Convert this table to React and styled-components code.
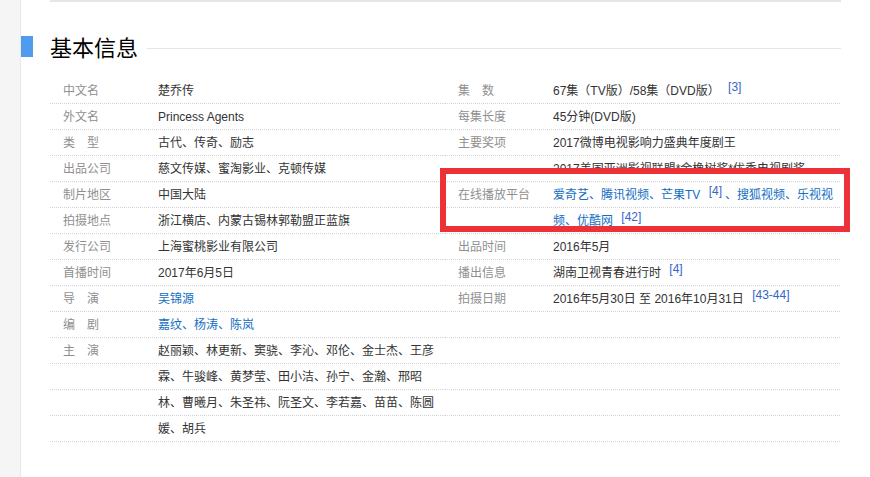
import React from 'react';
import styled, { createGlobalStyle } from 'styled-components';

const GlobalStyle = createGlobalStyle`
    html, body {
        margin: 0;
        padding: 0;
        background: #fff;
    }
    body {
        font-family: "Liberation Sans", Arial, "Noto Sans CJK SC", sans-serif;
        font-size: 12px;
        color: #333;
    }
`;

const Page = styled.div`
    display: flex;
    min-height: 100vh;
`;

const Gutter = styled.div`
    flex: none;
    width: 20px;
    background: #f5f5f5;
    border-right: 1px solid #e9e9e9;
`;

const Main = styled.div`
    flex: 1;
    padding-right: 29px;
`;

const TopRule = styled.div`
    margin-left: 29px;
    height: 2px;
    background: #e6e6e6;
`;

const Heading = styled.div`
    display: flex;
    align-items: center;
    height: 21px;
    margin-top: 34px;
`;

const Marker = styled.span`
    flex: none;
    width: 12px;
    height: 21px;
    background: #4f9cee;
`;

const Title = styled.h2`
    margin: 0 0 0 17px;
    font-family: "Noto Sans CJK SC", sans-serif;
    font-size: 22px;
    font-weight: 400;
    line-height: 21px;
    color: #000;
`;

const TitleRule = styled.span`
    flex: 1;
    height: 1px;
    margin: 4px 0 0 9px;
    background: #e6e6e6;
`;

const Table = styled.div`
    position: relative;
    display: grid;
    grid-template-columns: 395px 1fr;
    margin: 21px 0 0 29px;
`;

const Column = styled.dl`
    position: relative;
    margin: 0;
    display: grid;
    grid-template-columns: 108px 284px;
    align-content: start;

    &::after {
        content: '';
        position: absolute;
        inset: 0;
        pointer-events: none;
        background: repeating-linear-gradient(to bottom, transparent 0 25px, #d4d4d4 25px 26px);
        -webkit-mask-image: repeating-linear-gradient(to right, #000 0 1px, transparent 1px 2px);
        mask-image: repeating-linear-gradient(to right, #000 0 1px, transparent 1px 2px);
    }
`;

const Name = styled.dt`
    padding-left: 13px;
    line-height: 26px;
    color: #8f8f8f;
    white-space: nowrap;
`;

const Value = styled.dd`
    margin: 0;
    line-height: 26px;
    color: ${props => (props.link ? '#136ec2' : '#333')};
`;

const Sup = styled.sup`
    position: relative;
    top: -4px;
    vertical-align: baseline;
    font-size: 12px;
    line-height: 0;
    margin-left: 2px;
    padding: 0 3px;
    color: #3366cc;
`;

const Highlight = styled.div`
    position: absolute;
    left: 390px;
    top: 90px;
    width: 410px;
    height: 64px;
    box-sizing: border-box;
    border: 6px solid #ec3237;
    pointer-events: none;
`;

const leftItems = [
    { name: '中文名', value: '楚乔传' },
    { name: '外文名', value: 'Princess Agents' },
    { name: '类　型', value: '古代、传奇、励志' },
    { name: '出品公司', value: '慈文传媒、蜜淘影业、克顿传媒' },
    { name: '制片地区', value: '中国大陆' },
    { name: '拍摄地点', value: '浙江横店、内蒙古锡林郭勒盟正蓝旗' },
    { name: '发行公司', value: '上海蜜桃影业有限公司' },
    { name: '首播时间', value: '2017年6月5日' },
    { name: '导　演', value: '吴锦源', link: true },
    { name: '编　剧', value: '嘉纹、杨涛、陈岚', link: true },
    {
        name: '主　演',
        value: '赵丽颖、林更新、窦骁、李沁、邓伦、金士杰、王彦霖、牛骏峰、黄梦莹、田小洁、孙宁、金瀚、邢昭林、曹曦月、朱圣祎、阮圣文、李若嘉、苗苗、陈圆媛、胡兵',
    },
];

const rightItems = [
    { name: '集　数', value: <>67集（TV版）/58集（DVD版） <Sup>[3]</Sup></> },
    { name: '每集长度', value: '45分钟(DVD版)' },
    {
        name: '主要奖项',
        value: <>2017微博电视影响力盛典年度剧王<br />2017美国亚洲影视联盟*金橡树奖*优秀电视剧奖</>,
    },
    {
        name: '在线播放平台',
        link: true,
        value: <>爱奇艺、腾讯视频、芒果TV <Sup>[4]</Sup>、搜狐视频、乐视视频、优酷网 <Sup>[42]</Sup></>,
    },
    { name: '出品时间', value: '2016年5月' },
    { name: '播出信息', value: <>湖南卫视青春进行时 <Sup>[4]</Sup></> },
    { name: '拍摄日期', value: <>2016年5月30日 至 2016年10月31日 <Sup>[43-44]</Sup></> },
];

function InfoColumn({ items }) {
    return (
        <Column>
            {items.map(item => (
                <React.Fragment key={item.name}>
                    <Name>{item.name}</Name>
                    <Value link={item.link}>{item.value}</Value>
                </React.Fragment>
            ))}
        </Column>
    );
}

export default function App() {
    return (
        <Page>
            <GlobalStyle />
            <Gutter />
            <Main>
                <TopRule />
                <Heading>
                    <Marker />
                    <Title>基本信息</Title>
                    <TitleRule />
                </Heading>
                <Table>
                    <InfoColumn items={leftItems} />
                    <InfoColumn items={rightItems} />
                    <Highlight />
                </Table>
            </Main>
        </Page>
    );
}
